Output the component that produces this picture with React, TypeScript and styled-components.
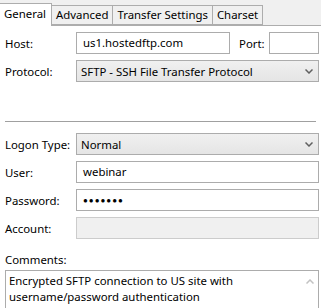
import styled, { createGlobalStyle } from 'styled-components'

const GlobalStyle = createGlobalStyle`
  body {
    margin: 0;
    background: #ffffff;
    font-family: "Noto Sans", "Open Sans", sans-serif;
    font-size: 11.4px;
    color: #000;
  }
`

const Window = styled.div`
  width: 321px;
  height: 308px;
  overflow: hidden;
`

const TabBar = styled.div`
  display: flex;
  align-items: flex-end;
  height: 26px;
  background: #f0f0f0;
  border-bottom: 1px solid #adadad;
  box-sizing: border-box;
`

const Tab = styled.div<{ $active?: boolean }>`
  box-sizing: border-box;
  height: ${(p) => (p.$active ? '23px' : '20px')};
  margin-bottom: ${(p) => (p.$active ? '-1px' : '0')};
  padding: ${(p) => (p.$active ? '2px 5px 0 4px' : '1px 4px 0 4px')};
  background: ${(p) => (p.$active ? '#ffffff' : '#f0f0f0')};
  border: 1px solid #adadad;
  border-left: none;
  border-bottom: ${(p) => (p.$active ? 'none' : '1px solid #adadad')};
  white-space: nowrap;
  line-height: 16px;
`

const Panel = styled.div`
  display: flex;
  flex-direction: column;
  padding: 6px 2px 0 5px;
`

const Row = styled.div<{ $gap?: number }>`
  display: flex;
  align-items: center;
  height: 22px;
  margin-bottom: ${(p) => p.$gap ?? 6}px;
`

const Label = styled.div<{ $width?: number }>`
  width: ${(p) => p.$width ?? 71}px;
  flex: none;
`

const Input = styled.div<{ $width?: number; $disabled?: boolean }>`
  box-sizing: border-box;
  height: 22px;
  ${(p) => (p.$width ? `width: ${p.$width}px; flex: none;` : 'flex: 1;')}
  border: 1px solid ${(p) => (p.$disabled ? '#cccccc' : '#acacac')};
  background: ${(p) => (p.$disabled ? '#f0f0f0' : '#ffffff')};
  padding: 0 6px;
  line-height: 20px;
  white-space: nowrap;
  overflow: hidden;
`

const Select = styled.div`
  box-sizing: border-box;
  flex: 1;
  height: 22px;
  border: 1px solid #acacac;
  background: linear-gradient(#f0f0f0, #e5e5e5);
  display: flex;
  align-items: center;
  justify-content: space-between;
  padding: 0 5px 0 4px;
  white-space: nowrap;
`

const PortLabel = styled.div`
  margin-left: 9px;
  width: 30px;
  flex: none;
`

const Separator = styled.div`
  height: 1px;
  background: #a0a0a0;
  margin: 39px 3px 11px 0;
`

const Dots = styled.span`
  font-size: 8px;
  letter-spacing: 1px;
  position: relative;
  top: -1px;
`

const CommentsLabel = styled.div`
  margin-top: 12px;
  height: 19px;
  line-height: 18px;
`

const CommentBox = styled.div`
  box-sizing: border-box;
  display: flex;
  height: 60px;
  border: 1px solid #acacac;
  border-bottom: none;
`

const CommentText = styled.div`
  flex: 1;
  padding: 2px 3px;
  line-height: 16px;
`

const ScrollTrack = styled.div`
  width: 17px;
  display: flex;
  justify-content: center;
  padding-top: 8px;
`

function Chevron({ up }: { up?: boolean }) {
  return (
    <svg width="8" height="5" viewBox="0 0 8 5">
      <path
        d={up ? 'M0.5 4.5 L4 1 L7.5 4.5' : 'M0.5 0.5 L4 4 L7.5 0.5'}
        fill="none"
        stroke={up ? '#c2c2c2' : '#606060'}
        strokeWidth="1.5"
      />
    </svg>
  )
}

export default function App() {
  return (
    <Window>
      <GlobalStyle />
      <TabBar>
        <Tab $active>General</Tab>
        <Tab>Advanced</Tab>
        <Tab>Transfer Settings</Tab>
        <Tab>Charset</Tab>
      </TabBar>
      <Panel>
        <Row>
          <Label>Host:</Label>
          <Input $width={154}>us1.hostedftp.com</Input>
          <PortLabel>Port:</PortLabel>
          <Input />
        </Row>
        <Row $gap={0}>
          <Label>Protocol:</Label>
          <Select>
            SFTP - SSH File Transfer Protocol
            <Chevron />
          </Select>
        </Row>
        <Separator />
        <Row>
          <Label>Logon Type:</Label>
          <Select>
            Normal
            <Chevron />
          </Select>
        </Row>
        <Row>
          <Label>User:</Label>
          <Input>webinar</Input>
        </Row>
        <Row>
          <Label>Password:</Label>
          <Input>
            <Dots>●●●●●●●</Dots>
          </Input>
        </Row>
        <Row $gap={0}>
          <Label>Account:</Label>
          <Input $disabled />
        </Row>
        <CommentsLabel>Comments:</CommentsLabel>
        <CommentBox>
          <CommentText>
            Encrypted SFTP connection to US site with
            <br />
            username/password authentication
          </CommentText>
          <ScrollTrack>
            <Chevron up />
          </ScrollTrack>
        </CommentBox>
      </Panel>
    </Window>
  )
}
